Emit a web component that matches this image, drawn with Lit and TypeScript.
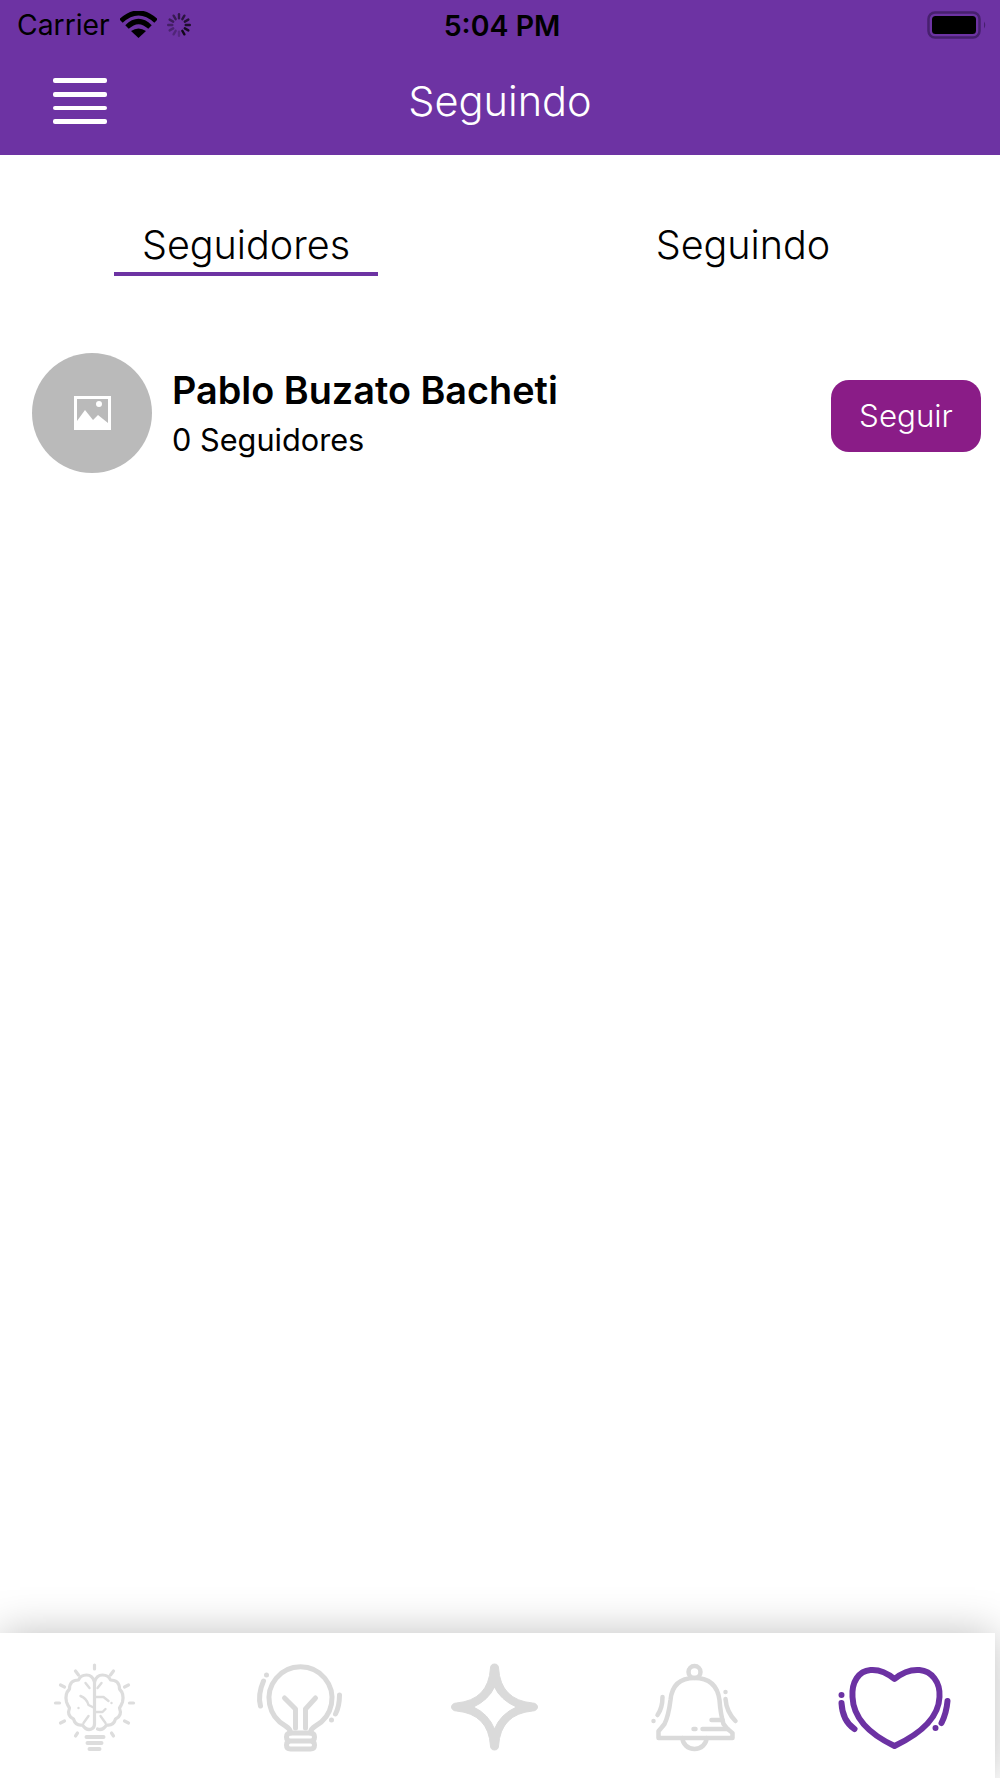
import { LitElement, html, css, svg } from "lit";
import { customElement } from "lit/decorators.js";

const spokes = Array.from({ length: 12 }, (_, i) => i);

// Tab icons are drawn in page coordinates, so each viewBox is its place on the page.
const brain = svg`
  <g fill="none" stroke-width="3.200" stroke-linecap="round" stroke-linejoin="round">
    <path d="M94 1682Q92 1675 86 1675Q80 1675 78 1680Q69 1680 69 1689Q64 1694 66 1702Q67 1705 69 1708Q66 1716 73 1719Q75 1726 82 1725Q86 1731 91 1729Q94 1728 94 1724V1682"/>
    <path d="M94 1682Q96 1675 102 1675Q108 1675 110 1680Q119 1680 119 1689Q124 1694 122 1702Q121 1705 119 1708Q122 1716 115 1719Q113 1726 106 1725Q102 1731 97 1729"/>
    <path stroke-width="2.400" d="M80 1696Q86 1698 88 1705L94 1708M85 1683L89 1688M88 1716L83 1723M78 1708V1708M94 1697H103L108 1701M111 1703V1703M94 1712H102L105 1709M101 1683L97 1688M100 1716L105 1723"/>
    <path d="M94 1665V1669M75 1671L78 1675M113 1671L110 1675M60 1685L64 1687M128 1685L124 1687M55 1703H59M129 1703H133M60 1723L64 1721M124 1721L128 1723M75 1736L77 1733M111 1733L113 1736"/>
    <path d="M86 1737H103M87 1743H101M89 1749H99" stroke-width="4"/>
  </g>`;

const bulb = svg`
  <g fill="none" stroke-width="5" stroke-linecap="round" stroke-linejoin="round">
    <path d="M285 1726A31.500 31.500 0 1 1 315 1726Q310 1729 310 1733M285 1726Q290 1729 290 1733"/>
    <path d="M284 1698L295 1709V1728M315 1698L305 1709V1728"/>
    <path d="M290 1733H310Q314 1733 314 1737Q314 1741 310 1741H290Q286 1741 286 1737Q286 1733 290 1733ZM290 1741H310Q314 1741 314 1745Q314 1749 310 1749H290Q286 1749 286 1745Q286 1741 290 1741Z"/>
    <path d="M263 1681Q257 1695 260 1706M339 1695Q339 1706 335 1714M266 1675V1675M331 1720V1720"/>
  </g>`;

const star = svg`
  <path fill-rule="evenodd" d="M494 1664c3 0 4 2 4 4Q500 1700 532 1703c3 0 5 2 5 4s-2 4-5 4Q500 1714 498 1746c0 2-1 4-4 4s-4-2-4-4Q488 1714 456 1711c-3 0-5-2-5-4s2-4 5-4Q488 1700 490 1668c0-2 1-4 4-4ZM494 1687Q488 1700 473 1707Q488 1714 494 1729Q500 1714 516 1707Q500 1700 494 1687Z"/>`;

const bell = svg`
  <g fill="none" stroke-width="4.500" stroke-linecap="round" stroke-linejoin="round">
    <circle cx="694" cy="1672" r="6"/>
    <path d="M658 1738H732V1733Q726 1729 723 1724Q720 1714 719 1700Q716 1678 694 1678Q672 1678 670 1700Q668 1716 664 1724Q660 1729 658 1731Z"/>
    <path d="M682 1738A12 11 0 0 0 706 1738"/>
    <path d="M702 1729H727M711 1720H722M693 1729H695"/>
    <path d="M662 1697Q662 1708 657 1715M653 1721V1721M725 1699Q726 1712 735 1721M725 1692V1692"/>
  </g>`;

const heart = svg`
  <g fill="none" stroke-width="6" stroke-linecap="round" stroke-linejoin="round">
    <path d="M894 1679Q882 1669 870 1670C858 1671 851 1682 852 1697C853 1722 875 1737 894 1746C913 1737 938 1722 939 1697C940 1682 931 1671 919 1670Q906 1669 894 1679Z"/>
    <path d="M841 1703Q842 1721 854 1729M841 1695V1695M947 1701Q946 1713 941 1723M935 1728V1728"/>
  </g>`;

const tabIcons = [
  { box: "49.500 1655 100 100", art: brain, color: "#dddddd" },
  { box: "248.500 1655 100 100", art: bulb, color: "#dadada" },
  { box: "447.500 1655 100 100", art: star, color: "#dadada" },
  { box: "646.500 1655 100 100", art: bell, color: "#dadada" },
  { box: "845.500 1655 100 100", art: heart, color: "#6c32a3" },
];

@customElement("app-root")
export class AppRoot extends LitElement {
  static styles = css`
    :host {
      display: flex;
      flex-direction: column;
      height: 1778px;
      background: #fff;
      font-family: Inter, "Noto Sans", sans-serif;
      color: #000;
      overflow: hidden;
    }

    .top {
      height: 155px;
      background: #6d33a3;
      flex: none;
    }

    .status {
      display: grid;
      grid-template-columns: 1fr auto 1fr;
      align-items: center;
      height: 50px;
      padding: 0 13px 0 17px;
      font-size: 28.300px;
    }

    .status__left {
      display: flex;
      align-items: center;
      gap: 10px;
    }

    .status__time {
      font-weight: 600;
      font-size: 28.500px;
    }

    .status__right {
      display: flex;
      justify-content: flex-end;
    }

    .nav {
      display: grid;
      grid-template-columns: 1fr auto 1fr;
      align-items: center;
      height: 102px;
      padding: 0 0 0 53px;
    }

    .burger {
      display: grid;
      gap: 9px;
      width: 54px;
    }

    .burger span {
      display: block;
      height: 4.600px;
      border-radius: 2px;
      background: #fff;
    }

    .nav__title {
      color: #fff;
      font-size: 41.500px;
      font-weight: 300;
      margin-left: -53px;
    }

    main {
      flex: 1;
      min-height: 0;
    }

    .tabs {
      display: grid;
      grid-template-columns: 264px 264px;
      column-gap: 233px;
      padding: 63px 0 0 114px;
    }

    .tab {
      height: 54px;
      text-align: center;
      font-size: 39.500px;
      font-weight: 300;
      line-height: 54px;
    }

    .tab--active {
      border-bottom: 4px solid #6d33a3;
    }

    .row {
      display: flex;
      align-items: center;
      margin-top: 77px;
      padding: 0 19px 0 32px;
    }

    .avatar {
      display: grid;
      place-items: center;
      width: 120px;
      height: 120px;
      border-radius: 50%;
      background: #bababa;
      flex: none;
    }

    .who {
      flex: 1;
      margin-left: 20px;
      margin-top: 8px;
    }

    .who__name {
      font-size: 37.800px;
      font-weight: 600;
      line-height: 46px;
    }

    .who__count {
      font-size: 30.700px;
      line-height: 54px;
    }

    .follow {
      width: 150px;
      height: 72px;
      margin-top: 5px;
      border: 0;
      border-radius: 18px;
      background: #8a1c87;
      color: #fff;
      font: inherit;
      font-size: 31.300px;
      font-weight: 300;
    }

    .tabbar {
      display: grid;
      grid-template-columns: repeat(5, 1fr);
      justify-items: center;
      height: 145px;
      margin-right: 5px;
      padding-top: 22px;
      box-sizing: border-box;
      background: #fff;
      box-shadow: 0 0 40px rgba(0, 0, 0, 0.25);
      flex: none;
    }

    .tabbar svg {
      display: block;
      width: 100px;
      height: 100px;
      overflow: visible;
    }
  `;

  render() {
    return html`
      <div class="top">
        <div class="status">
          <div class="status__left">
            <span>Carrier</span>
            <svg width="37" height="28" viewBox="120 10 37 28">
              <g fill="none" stroke="#000" stroke-width="5">
                <path d="M121 20Q138.500 4 156 20M127 26Q138.500 15 150 26" />
              </g>
              <path d="M131 30Q138.500 25 146 30L138.500 37Z" />
            </svg>
            <svg width="24" height="24" viewBox="-12 -12 24 24">
              ${spokes.map(
                (i) => svg`<rect
                  x="-1.200"
                  y="-12"
                  width="2.400"
                  height="6.500"
                  rx="1.200"
                  transform="rotate(${i * 30})"
                  opacity=${0.2 + (((i + 6) % 12) / 12) * 0.7}
                />`,
              )}
            </svg>
          </div>
          <span class="status__time">5:04 PM</span>
          <div class="status__right">
            <svg width="60" height="28" viewBox="0 0 60 28">
              <rect
                x="1.500"
                y="1.500"
                width="51"
                height="25"
                rx="6.500"
                fill="none"
                stroke="#47206e"
                stroke-width="2.500"
              />
              <rect x="5" y="5" width="44" height="18" rx="3.500" />
              <path d="M57 10.500Q59.500 14 57 17.500Z" fill="#47206e" />
            </svg>
          </div>
        </div>
        <div class="nav">
          <div class="burger"><span></span><span></span><span></span><span></span></div>
          <span class="nav__title">Seguindo</span>
        </div>
      </div>

      <main>
        <div class="tabs">
          <div class="tab tab--active">Seguidores</div>
          <div class="tab">Seguindo</div>
        </div>
        <div class="row">
          <div class="avatar">
            <svg width="37" height="34" viewBox="0 0 37 34">
              <path
                fill="#fff"
                fill-rule="evenodd"
                d="M0 0H37V34H0ZM3 3V25L11 14L19 24L24 19L34 27V3ZM25 5A3 3 0 1 1 25 11A3 3 0 1 1 25 5Z"
              />
            </svg>
          </div>
          <div class="who">
            <div class="who__name">Pablo Buzato Bacheti</div>
            <div class="who__count">0 Seguidores</div>
          </div>
          <button class="follow">Seguir</button>
        </div>
      </main>

      <nav class="tabbar">
        ${tabIcons.map(
          (icon) => html`<svg
            viewBox=${icon.box}
            fill=${icon.color}
            stroke=${icon.color}
          >
            ${icon.art}
          </svg>`,
        )}
      </nav>
    `;
  }
}
